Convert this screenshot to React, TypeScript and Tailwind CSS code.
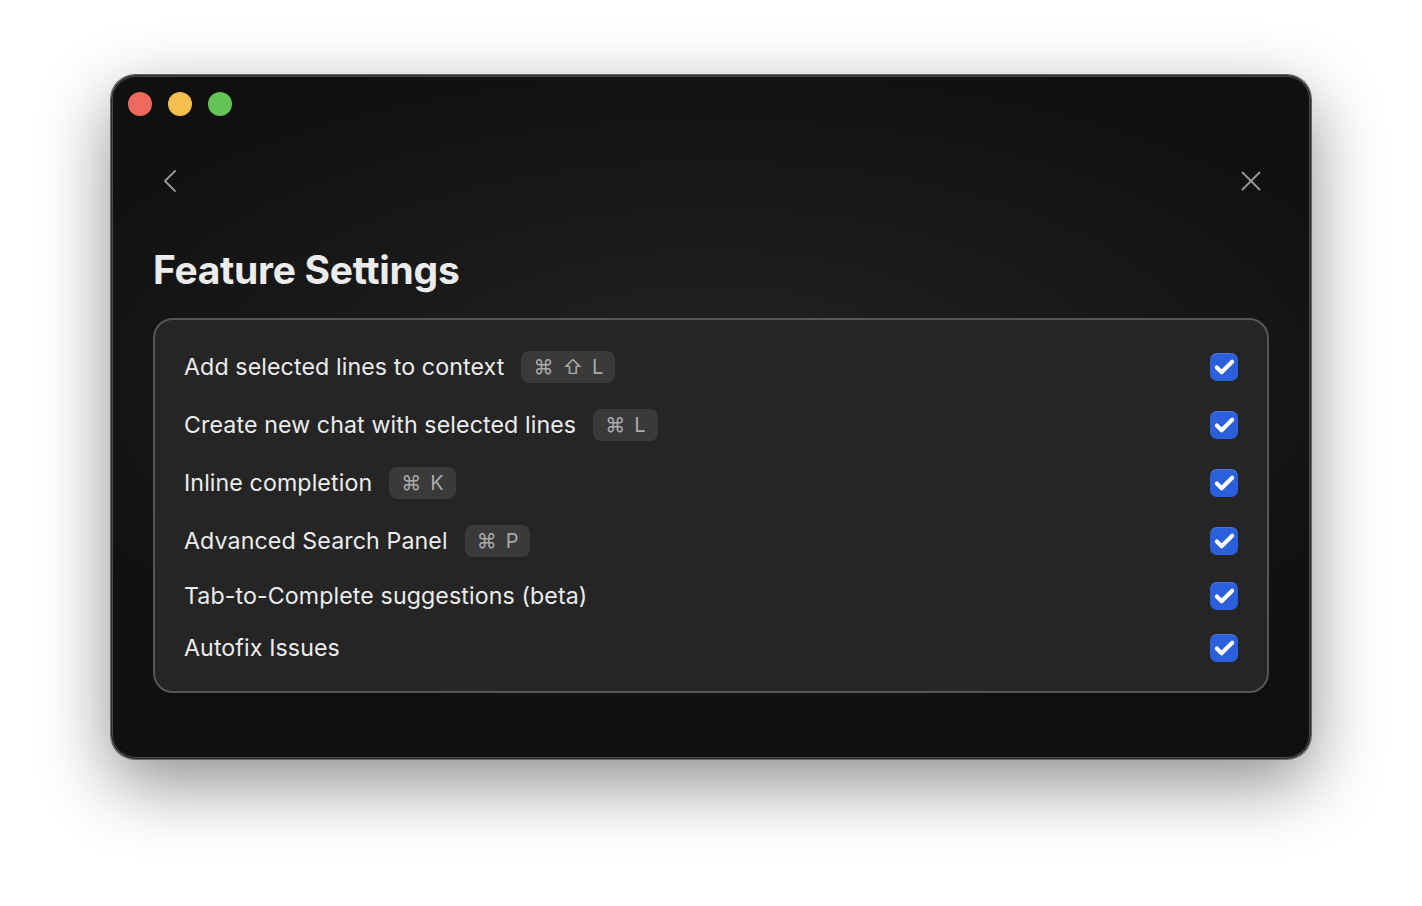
import { Check, ChevronLeft, X } from "lucide-react"

interface SettingRow {
    label: string
    keys?: string[]
}

const rows: SettingRow[] = [
    { label: "Add selected lines to context", keys: ["⌘", "⇧", "L"] },
    { label: "Create new chat with selected lines", keys: ["⌘", "L"] },
    { label: "Inline completion", keys: ["⌘", "K"] },
    { label: "Advanced Search Panel", keys: ["⌘", "P"] },
    { label: "Tab-to-Complete suggestions (beta)" },
    { label: "Autofix Issues" },
]

const Checkbox = () => (
    <div className="w-[28px] h-[28px] rounded-[7px] bg-[#2c5fdb] flex items-center justify-center shadow-[inset_0_1px_0_rgba(255,255,255,0.15)]">
        <Check className="w-[23px] h-[23px] text-white" strokeWidth={4.2} />
    </div>
)

const App = () => {
    return (
        <div className="w-[1422px] h-[906px] bg-white pt-[75px] pl-[111px] font-['Inter','Noto_Sans',sans-serif]">
            <div className="relative w-[1200px] h-[684px] rounded-[24px] overflow-hidden bg-[radial-gradient(ellipse_65%_50%_at_50%_45%,#242424_0%,#1b1b1b_40%,#101010_100%)] border border-[#2a2a2a] shadow-[0_0_0_1px_#6a6a6a,inset_0_0_0_1px_#4a4a4a,0_24px_70px_rgba(0,0,0,0.45)]">
                <div className="flex gap-[16px] pt-[16px] pl-[16px]">
                    <div className="w-[24px] h-[24px] rounded-full bg-[#ee6a5f]" />
                    <div className="w-[24px] h-[24px] rounded-full bg-[#f5be4f]" />
                    <div className="w-[24px] h-[24px] rounded-full bg-[#61c454]" />
                </div>

                <div className="px-[41px]">
                    <div className="flex items-center justify-between mt-[45px] h-[40px] pr-[1px]">
                        <ChevronLeft className="w-[40px] h-[40px] text-[#9a9a9a] -ml-[3px]" strokeWidth={1.1} />
                        <X className="w-[34px] h-[34px] text-[#9a9a9a]" strokeWidth={1.25} />
                    </div>

                    <h1 className="mt-[46px] text-[39px] leading-[46px] font-bold text-[#ececec] tracking-[-0.3px]">
                        Feature Settings
                    </h1>

                    <div className="mt-[25px] rounded-[20px] border-2 border-[#565656] bg-[#252525] pt-[31px] pb-[30px] pl-[29px] pr-[29px] flex flex-col gap-[26px]">
                        {rows.map((row) => (
                            <div key={row.label} className={`flex items-center justify-between ${row.keys ? "h-[32px]" : "h-[26px]"}`}>
                                <div className="flex items-center gap-[17px]">
                                    <span className="text-[23.2px] leading-[26px] text-[#ececec] tracking-[0.1px]">{row.label}</span>
                                    {row.keys && (
                                        <span className="h-[32px] px-[12px] rounded-[8px] bg-[#3a3a3a] text-[#a9a9a9] text-[20px] flex items-center gap-[9px]">
                                            {row.keys.map((k) => (
                                                <span key={k}>{k}</span>
                                            ))}
                                        </span>
                                    )}
                                </div>
                                <Checkbox />
                            </div>
                        ))}
                    </div>
                </div>
            </div>
        </div>
    )
}

export default App
